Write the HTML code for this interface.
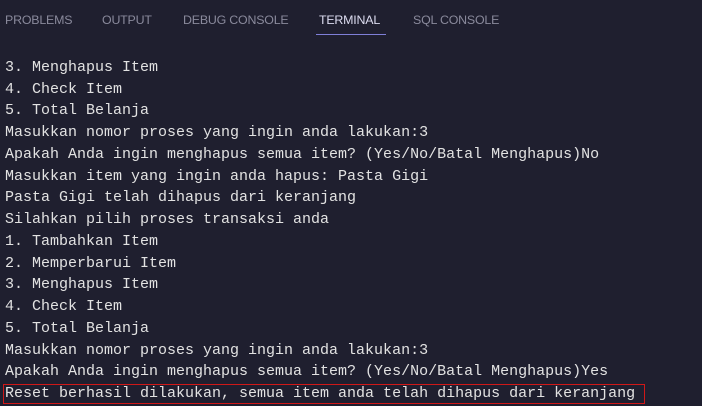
<!DOCTYPE html>
<html><head><meta charset="utf-8"><style>
html,body{margin:0;padding:0;}
body{width:702px;height:406px;background:#1f1f2f;overflow:hidden;position:relative;}
.tab{position:absolute;top:13px;font:12.4px "Liberation Sans",sans-serif;color:#8a8a9c;letter-spacing:-0.2px;}
.tab.act{color:#dcdcf0;}
.ul{position:absolute;left:316px;top:34px;width:70px;height:1px;background:#7f7fd8;}
pre{position:absolute;left:5px;top:57px;margin:0;font:15px/21.73px "Liberation Mono",monospace;color:#e2e2e2;letter-spacing:0;}
.box{position:absolute;left:3px;top:384px;width:640px;height:18px;border:1px solid #d01818;}
</style></head><body>
<div class="tab" style="left:5px">PROBLEMS</div>
<div class="tab" style="left:102px">OUTPUT</div>
<div class="tab" style="left:183px">DEBUG CONSOLE</div>
<div class="tab act" style="left:319px">TERMINAL</div>
<div class="tab" style="left:413px">SQL CONSOLE</div>
<div class="ul"></div>
<pre>3. Menghapus Item
4. Check Item
5. Total Belanja
Masukkan nomor proses yang ingin anda lakukan:3
Apakah Anda ingin menghapus semua item? (Yes/No/Batal Menghapus)No
Masukkan item yang ingin anda hapus: Pasta Gigi
Pasta Gigi telah dihapus dari keranjang
Silahkan pilih proses transaksi anda
1. Tambahkan Item
2. Memperbarui Item
3. Menghapus Item
4. Check Item
5. Total Belanja
Masukkan nomor proses yang ingin anda lakukan:3
Apakah Anda ingin menghapus semua item? (Yes/No/Batal Menghapus)Yes
Reset berhasil dilakukan, semua item anda telah dihapus dari keranjang</pre>
<div class="box"></div>
</body></html>
